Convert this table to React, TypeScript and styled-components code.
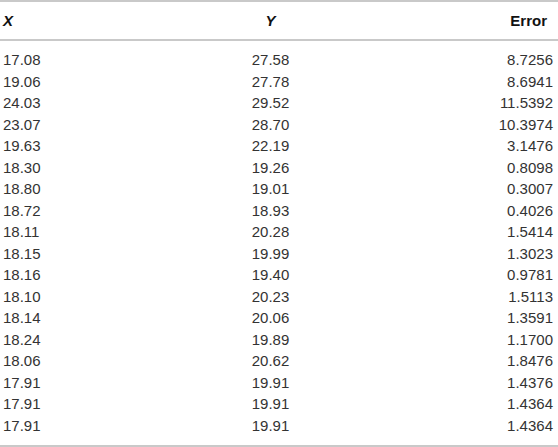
import styled, { createGlobalStyle } from "styled-components";

const rows: [string, string, string][] = [
  ["17.08", "27.58", "8.7256"],
  ["19.06", "27.78", "8.6941"],
  ["24.03", "29.52", "11.5392"],
  ["23.07", "28.70", "10.3974"],
  ["19.63", "22.19", "3.1476"],
  ["18.30", "19.26", "0.8098"],
  ["18.80", "19.01", "0.3007"],
  ["18.72", "18.93", "0.4026"],
  ["18.11", "20.28", "1.5414"],
  ["18.15", "19.99", "1.3023"],
  ["18.16", "19.40", "0.9781"],
  ["18.10", "20.23", "1.5113"],
  ["18.14", "20.06", "1.3591"],
  ["18.24", "19.89", "1.1700"],
  ["18.06", "20.62", "1.8476"],
  ["17.91", "19.91", "1.4376"],
  ["17.91", "19.91", "1.4364"],
  ["17.91", "19.91", "1.4364"],
];

export default function App() {
  return (
    <>
      <Global />
      <Table>
        <Head>
          <HeadCell align="left">
            <i>X</i>
          </HeadCell>
          <HeadCell align="center">
            <i>Y</i>
          </HeadCell>
          <HeadCell align="right">Error</HeadCell>
        </Head>
        <Body>
          {rows.map((r, i) => (
            <Row key={i}>
              <Cell align="left">{r[0]}</Cell>
              <Cell align="center">{r[1]}</Cell>
              <Cell align="right">{r[2]}</Cell>
            </Row>
          ))}
        </Body>
      </Table>
    </>
  );
}

const Global = createGlobalStyle`
  body {
    margin: 0;
    background: #fff;
    font-family: "Liberation Sans", Arial, sans-serif;
  }
`;

const Table = styled.div`
  width: 558px;
  border-top: 2px solid #c9c9c9;
  border-bottom: 2px solid #c9c9c9;
`;

const Head = styled.div`
  display: grid;
  grid-template-columns: 200px 141px 1fr;
  align-items: center;
  height: 37px;
  border-bottom: 2px solid #c9c9c9;
`;

type Align = "left" | "center" | "right";

const HeadCell = styled.div<{ align: Align }>`
  text-align: ${(p) => p.align};
  padding: ${(p) => (p.align === "right" ? "0 11px 0 0" : p.align === "left" ? "0 0 0 3px" : "0")};
  font-size: 15px;
  font-weight: bold;
  color: #111;
`;

const Body = styled.div`
  padding: 8px 0 9px;
`;

const Row = styled.div`
  display: grid;
  grid-template-columns: 200px 141px 1fr;
  height: 21.5px;
  line-height: 21.5px;
`;

const Cell = styled.div<{ align: Align }>`
  text-align: ${(p) => p.align};
  padding: ${(p) => (p.align === "right" ? "0 5px 0 0" : p.align === "left" ? "0 0 0 3px" : "0")};
  font-size: 15px;
  color: #333;
`;
